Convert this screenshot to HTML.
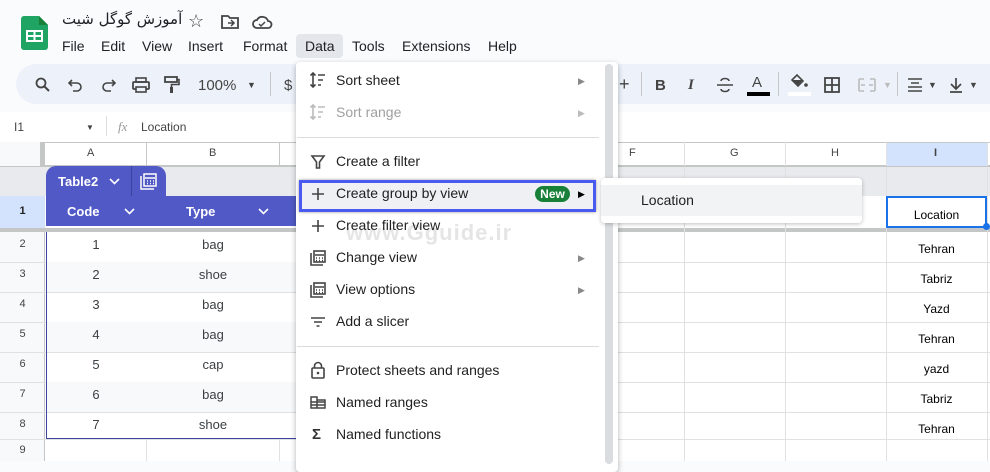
<!DOCTYPE html>
<html><head><meta charset="utf-8"><style>
*{margin:0;padding:0;box-sizing:border-box}
body{width:990px;height:461px;overflow:hidden;background:#f9fbfd;font-family:"Liberation Sans",Arial,sans-serif;position:relative;color:#202124}
.a{position:absolute;white-space:nowrap}
.mb{font-size:14px;color:#202124;top:38px}
.ic{position:absolute;font-size:15px;color:#444746}
.hl{position:absolute;left:0;width:45px;text-align:center;font-size:11px;color:#444;}
.cell{position:absolute;font-size:13px;text-align:center;color:#3c4043}
.mi{position:absolute;left:336px;font-size:14px;color:#1f1f1f;white-space:nowrap}
.arr{position:absolute;left:578px;font-size:9px;color:#888}
.mic{position:absolute;left:309px;width:18px;height:18px}
</style></head><body>
<svg class="a" style="left:21px;top:16px" width="27" height="34" viewBox="0 0 27 34"><path d="M3 0h15l9 9v22a3 3 0 0 1-3 3H3a3 3 0 0 1-3-3V3a3 3 0 0 1 3-3z" fill="#1fa463"/><path d="M18 0v9h9z" fill="#188038"/><rect x="5" y="14" width="17" height="12" fill="#fff"/><rect x="7" y="16" width="5.5" height="3" fill="#1fa463"/><rect x="14.5" y="16" width="5.5" height="3" fill="#1fa463"/><rect x="7" y="21" width="5.5" height="3" fill="#1fa463"/><rect x="14.5" y="21" width="5.5" height="3" fill="#1fa463"/></svg>
<div class="a" style="left:62px;top:10px;font-size:15px;font-family:'DejaVu Sans',sans-serif;direction:rtl">آموزش گوگل شیت</div>
<div class="a" style="left:188px;top:11px;font-size:18px;color:#444">☆</div>
<svg class="a" style="left:220px;top:14px" width="20" height="16"><path d="M2 2h6l2 2h8v10H2z" fill="none" stroke="#444" stroke-width="1.8"/><path d="M8 9h6M11 6l3 3-3 3" stroke="#444" stroke-width="1.5" fill="none"/></svg>
<svg class="a" style="left:251px;top:14px" width="22" height="16"><path d="M6 14a4 4 0 0 1 0-8 6 6 0 0 1 11 1 3.5 3.5 0 0 1 0 7z" fill="none" stroke="#444" stroke-width="1.8"/><path d="M8 10l2 2 4-4" stroke="#444" stroke-width="1.5" fill="none"/></svg>
<div class="mb a" style="left:62px">File</div>
<div class="mb a" style="left:101px">Edit</div>
<div class="mb a" style="left:142px">View</div>
<div class="mb a" style="left:188px">Insert</div>
<div class="mb a" style="left:243px">Format</div>
<div class="a" style="left:296px;top:34px;width:47px;height:24px;background:#e3e7ec;border-radius:4px"></div>
<div class="mb a" style="left:305px">Data</div>
<div class="mb a" style="left:352px">Tools</div>
<div class="mb a" style="left:402px">Extensions</div>
<div class="mb a" style="left:488px">Help</div>
<div class="a" style="left:16px;top:64px;width:974px;height:40px;background:#edf2fa;border-radius:20px 0 0 20px"></div>
<svg class="a" style="left:34px;top:76px" width="18" height="18"><circle cx="7" cy="7" r="4.5" fill="none" stroke="#444" stroke-width="1.8"/><path d="M10.5 10.5l4.5 4.5" stroke="#444" stroke-width="2"/></svg>
<svg class="a" style="left:68px;top:78px" width="16" height="14"><path d="M4 2L1 5l3 3M1 5h8a4 4 0 0 1 0 8H5" fill="none" stroke="#444" stroke-width="1.6"/></svg>
<svg class="a" style="left:100px;top:78px" width="16" height="14"><path d="M12 2l3 3-3 3M15 5H7a4 4 0 0 0 0 8h4" fill="none" stroke="#444" stroke-width="1.6"/></svg>
<svg class="a" style="left:132px;top:77px" width="18" height="16"><rect x="4" y="1" width="10" height="4" fill="none" stroke="#444" stroke-width="1.6"/><rect x="1" y="5" width="16" height="7" rx="1" fill="none" stroke="#444" stroke-width="1.8"/><rect x="4" y="10" width="10" height="5" fill="#edf2fa" stroke="#444" stroke-width="1.6"/></svg>
<svg class="a" style="left:164px;top:76px" width="16" height="18"><rect x="1" y="1" width="12" height="5" fill="none" stroke="#444" stroke-width="1.8"/><path d="M13 3.5h2v5H7.5v3" fill="none" stroke="#444" stroke-width="1.6"/><rect x="6" y="11" width="3" height="6" fill="#444"/></svg>
<div class="a" style="left:198px;top:77px;font-size:15px;color:#444">100%</div>
<div class="a" style="left:247px;top:80px;font-size:9px;color:#444">▼</div>
<div class="a" style="left:270px;top:72px;width:1px;height:24px;background:#c7c7c7"></div>
<div class="a" style="left:284px;top:77px;font-size:15px;color:#444">$</div>
<div class="a" style="left:619px;top:74px;font-size:18px;color:#444">+</div>
<div class="a" style="left:641px;top:72px;width:1px;height:24px;background:#c7c7c7"></div>
<div class="a" style="left:655px;top:77px;font-size:15px;font-weight:bold;color:#444">B</div>
<div class="a" style="left:688px;top:77px;font-size:15px;font-style:italic;font-family:'Liberation Serif';font-weight:bold;color:#444">I</div>
<svg class="a" style="left:716px;top:77px" width="18" height="16"><path d="M13 4a4 2.5 0 0 0-8 0M5 12a4 2.5 0 0 0 8 0M1 8h16" fill="none" stroke="#444" stroke-width="1.6"/></svg>
<div class="a" style="left:752px;top:74px;font-size:15px;color:#444">A</div>
<div class="a" style="left:747px;top:92px;width:23px;height:4px;background:#000"></div>
<div class="a" style="left:778px;top:72px;width:1px;height:24px;background:#c7c7c7"></div>
<svg class="a" style="left:789px;top:73px" width="20" height="16"><path d="M3 7l5-5 6 6-5 5z" fill="none" stroke="#444" stroke-width="1.6"/><path d="M3 7h11l-5 5z" fill="#444"/><circle cx="17" cy="12" r="1.8" fill="#444"/></svg>
<div class="a" style="left:788px;top:92px;width:23px;height:4px;background:#fff"></div>
<svg class="a" style="left:824px;top:77px" width="16" height="16"><rect x="1" y="1" width="14" height="14" fill="none" stroke="#444" stroke-width="1.8"/><path d="M8 1v14M1 8h14" stroke="#444" stroke-width="1.8"/></svg>
<svg class="a" style="left:858px;top:77px" width="18" height="16"><path d="M1 2h5M1 14h5M12 2h5M12 14h5M1 2v12M17 2v12M3 8h4M11 8h4" fill="none" stroke="#bbb" stroke-width="1.6"/></svg>
<div class="a" style="left:883px;top:80px;font-size:9px;color:#bbb">▼</div>
<div class="a" style="left:897px;top:72px;width:1px;height:24px;background:#c7c7c7"></div>
<svg class="a" style="left:907px;top:78px" width="16" height="14"><path d="M1 1h14M4 5h8M1 9h14M1 13h14" stroke="#444" stroke-width="1.6"/></svg>
<div class="a" style="left:928px;top:80px;font-size:9px;color:#444">▼</div>
<svg class="a" style="left:949px;top:77px" width="14" height="16"><path d="M7 1v11M2 7l5 5 5-5M1 15h12" fill="none" stroke="#444" stroke-width="1.7"/></svg>
<div class="a" style="left:969px;top:80px;font-size:9px;color:#444">▼</div>
<div class="a" style="left:0;top:112px;width:990px;height:30px;background:#fff"></div>
<div class="a" style="left:14px;top:120px;font-size:12px;color:#444">I1</div>
<div class="a" style="left:86px;top:123px;font-size:8px;color:#444">▼</div>
<div class="a" style="left:106px;top:116px;width:1px;height:20px;background:#ddd"></div>
<div class="a" style="left:118px;top:119px;font-size:13px;font-style:italic;color:#999;font-family:'Liberation Serif'">fx</div>
<div class="a" style="left:141px;top:120px;font-size:12px;color:#444">Location</div>
<div class="a" style="left:0;top:142px;width:990px;height:319px;background:#fff"></div>
<div class="a" style="left:0;top:142px;width:990px;height:24px;background:#fff;border-top:1px solid #c4c7c5;border-bottom:1px solid #c4c7c5"></div>
<div class="a" style="left:0;top:142px;width:45px;height:319px;background:#f8f9fa;border-right:1px solid #c4c7c5"></div>
<div class="a" style="left:40px;top:142px;width:5px;height:24px;background:#c4c7c5"></div>
<div class="a" style="left:886px;top:143px;width:101px;height:23px;background:#d3e3fd"></div>
<div class="a" style="left:0;top:166px;width:990px;height:30px;background:#e8eaed"></div>
<div class="a" style="left:0;top:196px;width:45px;height:32px;background:#d3e3fd"></div>
<div class="a" style="left:0;top:228px;width:990px;height:4px;background:#c4c7c5"></div>
<div class="a" style="left:146px;top:142px;width:1px;height:24px;background:#c4c7c5"></div>
<div class="a" style="left:279px;top:142px;width:1px;height:24px;background:#c4c7c5"></div>
<div class="a" style="left:146px;top:439px;width:1px;height:22px;background:#e1e1e1"></div>
<div class="a" style="left:279px;top:439px;width:1px;height:22px;background:#e1e1e1"></div>
<div class="a" style="left:684px;top:142px;width:1px;height:319px;background:#e1e1e1"></div>
<div class="a" style="left:785px;top:142px;width:1px;height:319px;background:#e1e1e1"></div>
<div class="a" style="left:886px;top:142px;width:1px;height:319px;background:#e1e1e1"></div>
<div class="a" style="left:987px;top:142px;width:1px;height:319px;background:#e1e1e1"></div>
<div class="a" style="left:0;top:166px;width:990px;height:1px;background:#c4c7c5"></div>
<div class="a" style="left:87px;top:147px;font-size:11px;color:#444">A</div>
<div class="a" style="left:209px;top:147px;font-size:11px;color:#444">B</div>
<div class="a" style="left:629px;top:147px;font-size:11px;color:#444">F</div>
<div class="a" style="left:730px;top:147px;font-size:11px;color:#444">G</div>
<div class="a" style="left:831px;top:147px;font-size:11px;color:#444">H</div>
<div class="a" style="left:934px;top:147px;font-size:11px;color:#444;font-weight:bold">I</div>
<div class="a" style="left:0;top:262px;width:990px;height:1px;background:#e1e1e1"></div>
<div class="a" style="left:0;top:292px;width:990px;height:1px;background:#e1e1e1"></div>
<div class="a" style="left:0;top:322px;width:990px;height:1px;background:#e1e1e1"></div>
<div class="a" style="left:0;top:352px;width:990px;height:1px;background:#e1e1e1"></div>
<div class="a" style="left:0;top:382px;width:990px;height:1px;background:#e1e1e1"></div>
<div class="a" style="left:0;top:412px;width:990px;height:1px;background:#e1e1e1"></div>
<div class="a" style="left:0;top:439px;width:990px;height:1px;background:#e1e1e1"></div>
<div class="hl" style="top:205px;font-weight:bold;color:#222">1</div>
<div class="hl" style="top:238px">2</div><div class="hl" style="top:268px">3</div><div class="hl" style="top:298px">4</div><div class="hl" style="top:328px">5</div><div class="hl" style="top:358px">6</div><div class="hl" style="top:388px">7</div><div class="hl" style="top:418px">8</div><div class="hl" style="top:444px">9</div>
<div class="a" style="left:46px;top:166px;width:120px;height:30px;background:#5059c5;border-radius:10px 10px 0 0"></div>
<div class="a" style="left:131px;top:166px;width:1px;height:30px;background:#3c44a0"></div>
<div class="a" style="left:58px;top:174px;font-size:13px;font-weight:bold;color:#fff">Table2</div>
<svg class="a" style="left:109px;top:178px" width="11" height="7"><path d="M1 1l4.5 4.5L10 1" fill="none" stroke="#fff" stroke-width="1.6"/></svg>
<svg class="a" style="left:140px;top:173px" width="17" height="17"><path d="M1 3v13h13" fill="none" stroke="#fff" stroke-width="1.5"/><rect x="4" y="1" width="12" height="12" fill="none" stroke="#fff" stroke-width="1.5"/><path d="M5 5h10M7 8h1M10 8h1M13 8h1M7 10.5h1M10 10.5h1M13 10.5h1" stroke="#fff" stroke-width="1.5"/></svg>
<div class="a" style="left:46px;top:196px;width:250px;height:30px;background:#5059c5"></div>
<div class="a" style="left:67px;top:204px;font-size:13px;font-weight:bold;color:#fff">Code</div>
<svg class="a" style="left:124px;top:208px" width="11" height="7"><path d="M1 1l4.5 4.5L10 1" fill="none" stroke="#fff" stroke-width="1.6"/></svg>
<div class="a" style="left:186px;top:204px;font-size:13px;font-weight:bold;color:#fff">Type</div>
<svg class="a" style="left:258px;top:208px" width="11" height="7"><path d="M1 1l4.5 4.5L10 1" fill="none" stroke="#fff" stroke-width="1.6"/></svg>
<div class="a" style="left:46px;top:232px;width:1px;height:207px;background:#3c44a0"></div>
<div class="a" style="left:46px;top:438px;width:250px;height:1px;background:#3c44a0"></div>
<div class="a" style="left:47px;top:262px;width:249px;height:30px;background:#f8f9fb"></div>
<div class="a" style="left:47px;top:322px;width:249px;height:30px;background:#f8f9fb"></div>
<div class="a" style="left:47px;top:382px;width:249px;height:30px;background:#f8f9fb"></div>
<div class="cell" style="left:46px;width:100px;top:237px">1</div><div class="cell" style="left:146px;width:134px;top:237px">bag</div>
<div class="cell" style="left:46px;width:100px;top:267px">2</div><div class="cell" style="left:146px;width:134px;top:267px">shoe</div>
<div class="cell" style="left:46px;width:100px;top:297px">3</div><div class="cell" style="left:146px;width:134px;top:297px">bag</div>
<div class="cell" style="left:46px;width:100px;top:327px">4</div><div class="cell" style="left:146px;width:134px;top:327px">bag</div>
<div class="cell" style="left:46px;width:100px;top:357px">5</div><div class="cell" style="left:146px;width:134px;top:357px">cap</div>
<div class="cell" style="left:46px;width:100px;top:387px">6</div><div class="cell" style="left:146px;width:134px;top:387px">bag</div>
<div class="cell" style="left:46px;width:100px;top:417px">7</div><div class="cell" style="left:146px;width:134px;top:417px">shoe</div>
<div class="a" style="left:886px;top:196px;width:101px;height:32px;background:#fff"></div>
<div class="a" style="left:886px;top:196px;width:101px;height:32px;border:2px solid #1a73e8"></div>
<div class="a" style="left:983px;top:223px;width:7px;height:7px;border-radius:50%;background:#1a73e8"></div>
<div class="cell" style="left:886px;width:101px;top:208px;color:#000;font-size:12px">Location</div>
<div class="cell" style="left:886px;width:101px;top:242px;color:#000;font-size:12px">Tehran</div>
<div class="cell" style="left:886px;width:101px;top:272px;color:#000;font-size:12px">Tabriz</div>
<div class="cell" style="left:886px;width:101px;top:302px;color:#000;font-size:12px">Yazd</div>
<div class="cell" style="left:886px;width:101px;top:332px;color:#000;font-size:12px">Tehran</div>
<div class="cell" style="left:886px;width:101px;top:362px;color:#000;font-size:12px">yazd</div>
<div class="cell" style="left:886px;width:101px;top:392px;color:#000;font-size:12px">Tabriz</div>
<div class="cell" style="left:886px;width:101px;top:422px;color:#000;font-size:12px">Tehran</div>
<div class="a" style="left:296px;top:62px;width:322px;height:410px;background:#fff;box-shadow:0 2px 6px rgba(0,0,0,.3);border-radius:4px"></div>
<div class="a" style="left:605px;top:64px;width:8px;height:400px;background:#dadce0;border-radius:4px"></div>
<div class="a" style="left:297px;top:137px;width:302px;height:1px;background:#dadce0"></div>
<div class="a" style="left:297px;top:346px;width:302px;height:1px;background:#dadce0"></div>
<div class="a" style="left:299px;top:180px;width:297px;height:32px;background:#eef0f3;border:3px solid #4a5af0;box-shadow:0 0 3px rgba(0,0,0,.4)"></div>
<div class="mi" style="top:72px">Sort sheet</div><div class="arr" style="top:76px">▶</div>
<div class="mi" style="top:104px;color:#a0a0a0">Sort range</div><div class="arr" style="top:108px;color:#bbb">▶</div>
<div class="mi" style="top:153px">Create a filter</div>
<div class="mi" style="top:185px">Create group by view</div>
<div class="a" style="left:535px;top:186px;width:35px;height:16px;border-radius:8px;background:#188038;color:#fff;font-size:12px;font-weight:bold;text-align:center;line-height:16px">New</div>
<div class="arr" style="top:189px;color:#000">▶</div>
<div class="a" style="left:346px;top:220px;font-size:22px;font-weight:bold;color:rgba(160,160,160,.28);letter-spacing:1px">www.Gguide.ir</div>
<div class="mi" style="top:217px">Create filter view</div>
<div class="mi" style="top:249px">Change view</div><div class="arr" style="top:253px">▶</div>
<div class="mi" style="top:281px">View options</div><div class="arr" style="top:285px">▶</div>
<div class="mi" style="top:313px">Add a slicer</div>
<div class="mi" style="top:362px">Protect sheets and ranges</div>
<div class="mi" style="top:394px">Named ranges</div>
<div class="mi" style="top:426px">Named functions</div>
<svg class="mic" style="top:71px" viewBox="0 0 18 18"><path d="M4 2v14M1.5 4.5L4 2l2.5 2.5M1.5 13.5L4 16l2.5-2.5M9 4h7M9 9h5M9 14h3" stroke="#444" stroke-width="1.6" fill="none"/></svg>
<svg class="mic" style="top:103px" viewBox="0 0 18 18"><path d="M4 2v14M1.5 4.5L4 2l2.5 2.5M1.5 13.5L4 16l2.5-2.5M9 4h7M9 9h5M9 14h3" stroke="#bbb" stroke-width="1.6" fill="none"/></svg>
<svg class="mic" style="top:153px" viewBox="0 0 18 18"><path d="M3 3h12l-4.5 6v6h-3V9z" stroke="#444" stroke-width="1.6" fill="none"/></svg>
<svg class="mic" style="top:185px" viewBox="0 0 18 18"><path d="M9 3v12M3 9h12" stroke="#444" stroke-width="1.6"/></svg>
<svg class="mic" style="top:217px" viewBox="0 0 18 18"><path d="M9 3v12M3 9h12" stroke="#444" stroke-width="1.6"/></svg>
<svg class="mic" style="top:249px" viewBox="0 0 18 18"><path d="M2 4v12h12" fill="none" stroke="#444" stroke-width="1.6"/><rect x="5" y="2" width="11" height="11" fill="none" stroke="#444" stroke-width="1.6"/><path d="M6 6h9M7 9h1M10 9h1M13 9h1M7 11.5h1M10 11.5h1M13 11.5h1" stroke="#444" stroke-width="1.5"/></svg>
<svg class="mic" style="top:281px" viewBox="0 0 18 18"><path d="M2 4v12h12" fill="none" stroke="#444" stroke-width="1.6"/><rect x="5" y="2" width="11" height="11" fill="none" stroke="#444" stroke-width="1.6"/><path d="M6 6h9M7 9h1M10 9h1M13 9h1M7 11.5h1M10 11.5h1M13 11.5h1" stroke="#444" stroke-width="1.5"/></svg>
<svg class="mic" style="top:313px" viewBox="0 0 18 18"><path d="M2 5h14M5 9h8M7.5 13h3" stroke="#444" stroke-width="1.6"/></svg>
<svg class="mic" style="top:361px" viewBox="0 0 18 18"><rect x="3" y="7" width="12" height="10" rx="1" fill="none" stroke="#444" stroke-width="1.6"/><path d="M5.5 7V5a3.5 3.5 0 0 1 7 0v2" fill="none" stroke="#444" stroke-width="1.6"/><circle cx="9" cy="12" r="1.3" fill="#444"/></svg>
<svg class="mic" style="top:393px" viewBox="0 0 18 18"><path d="M2 4h6v3h8v8H2zM2 9h14M8 7v8M2 12h14" fill="none" stroke="#444" stroke-width="1.5"/></svg>
<div class="ic" style="left:312px;top:426px;font-size:15px;font-weight:bold;color:#333">Σ</div>
<div class="a" style="left:601px;top:178px;width:261px;height:45px;background:#fff;border-radius:4px;box-shadow:0 1px 4px rgba(0,0,0,.25)"></div>
<div class="a" style="left:601px;top:185px;width:261px;height:31px;background:#f1f3f4"></div>
<div class="a" style="left:641px;top:192px;font-size:14px;color:#1f1f1f">Location</div>
</body></html>
